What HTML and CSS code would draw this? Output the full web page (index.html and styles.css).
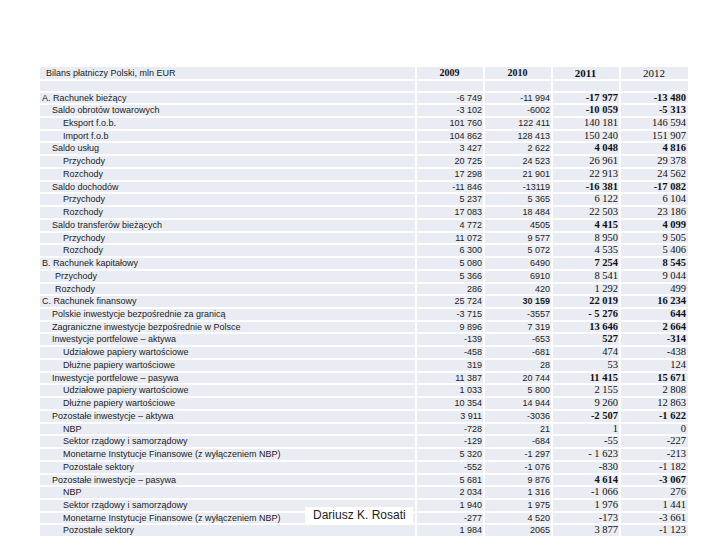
FILE: index.html
```html
<!DOCTYPE html>
<html lang="pl">
<head>
<meta charset="utf-8">
<title>Bilans płatniczy Polski</title>
<link rel="stylesheet" href="styles.css">
</head>
<body>
<div class="slide">
  <table class="bop">
    <colgroup>
      <col class="c-label"><col class="c-num"><col class="c-num"><col class="c-num"><col class="c-num last">
    </colgroup>
    <thead>
      <tr class="head">
        <th class="title">Bilans płatniczy Polski, mln EUR</th>
        <th class="yr b">2009</th>
        <th class="yr b">2010</th>
        <th class="yr b big">2011</th>
        <th class="yr big">2012</th>
      </tr>
      <tr class="blank"><td></td><td></td><td></td><td></td><td></td></tr>
    </thead>
    <tbody>
      <tr><td class="l0">A. Rachunek bieżący</td><td>-6 749</td><td>-11 994</td><td class="s b">-17 977</td><td class="s b">-13 480</td></tr>
      <tr><td class="l1">Saldo obrotów towarowych</td><td>-3 102</td><td>-6002</td><td class="s b">-10 059</td><td class="s b">-5 313</td></tr>
      <tr><td class="l2">Eksport f.o.b.</td><td>101 760</td><td>122 411</td><td class="s">140 181</td><td class="s">146 594</td></tr>
      <tr><td class="l2">Import f.o.b</td><td>104 862</td><td>128 413</td><td class="s">150 240</td><td class="s">151 907</td></tr>
      <tr><td class="l1">Saldo usług</td><td>3 427</td><td>2 622</td><td class="s b">4 048</td><td class="s b">4 816</td></tr>
      <tr><td class="l2">Przychody</td><td>20 725</td><td>24 523</td><td class="s">26 961</td><td class="s">29 378</td></tr>
      <tr><td class="l2">Rozchody</td><td>17 298</td><td>21 901</td><td class="s">22 913</td><td class="s">24 562</td></tr>
      <tr><td class="l1">Saldo dochodów</td><td>-11 846</td><td>-13119</td><td class="s b">-16 381</td><td class="s b">-17 082</td></tr>
      <tr><td class="l2">Przychody</td><td>5 237</td><td>5 365</td><td class="s">6 122</td><td class="s">6 104</td></tr>
      <tr><td class="l2">Rozchody</td><td>17 083</td><td>18 484</td><td class="s">22 503</td><td class="s">23 186</td></tr>
      <tr><td class="l1">Saldo transferów bieżących</td><td>4 772</td><td>4505</td><td class="s b">4 415</td><td class="s b">4 099</td></tr>
      <tr><td class="l2">Przychody</td><td>11 072</td><td>9 577</td><td class="s">8 950</td><td class="s">9 505</td></tr>
      <tr><td class="l2">Rozchody</td><td>6 300</td><td>5 072</td><td class="s">4 535</td><td class="s">5 406</td></tr>
      <tr><td class="l0">B. Rachunek kapitałowy</td><td>5 080</td><td>6490</td><td class="s b">7 254</td><td class="s b">8 545</td></tr>
      <tr><td class="lb">Przychody</td><td>5 366</td><td>6910</td><td class="s">8 541</td><td class="s">9 044</td></tr>
      <tr><td class="lb">Rozchody</td><td>286</td><td>420</td><td class="s">1 292</td><td class="s">499</td></tr>
      <tr><td class="l0">C. Rachunek finansowy</td><td>25 724</td><td class="b">30 159</td><td class="s b">22 019</td><td class="s b">16 234</td></tr>
      <tr><td class="l1">Polskie inwestycje bezpośrednie za granicą</td><td>-3 715</td><td>-3557</td><td class="s b">- 5 276</td><td class="s b">644</td></tr>
      <tr><td class="l1">Zagraniczne inwestycje bezpośrednie w Polsce</td><td>9 896</td><td>7 319</td><td class="s b">13 646</td><td class="s b">2 664</td></tr>
      <tr><td class="l1">Inwestycje portfelowe – aktywa</td><td>-139</td><td>-653</td><td class="s b">527</td><td class="s b">-314</td></tr>
      <tr><td class="l2">Udziałowe papiery wartościowe</td><td>-458</td><td>-681</td><td class="s">474</td><td class="s">-438</td></tr>
      <tr><td class="l2">Dłużne papiery wartościowe</td><td>319</td><td>28</td><td class="s">53</td><td class="s">124</td></tr>
      <tr><td class="l1">Inwestycje portfelowe – pasywa</td><td>11 387</td><td>20 744</td><td class="s b">11 415</td><td class="s b">15 671</td></tr>
      <tr><td class="l2">Udziałowe papiery wartościowe</td><td>1 033</td><td>5 800</td><td class="s">2 155</td><td class="s">2 808</td></tr>
      <tr><td class="l2">Dłużne papiery wartościowe</td><td>10 354</td><td>14 944</td><td class="s">9 260</td><td class="s">12 863</td></tr>
      <tr><td class="l1">Pozostałe inwestycje – aktywa</td><td>3 911</td><td>-3036</td><td class="s b">-2 507</td><td class="s b">-1 622</td></tr>
      <tr><td class="l2">NBP</td><td>-728</td><td>21</td><td class="s">1</td><td class="s">0</td></tr>
      <tr><td class="l2">Sektor rządowy i samorządowy</td><td>-129</td><td>-684</td><td class="s">-55</td><td class="s">-227</td></tr>
      <tr><td class="l2">Monetarne Instytucje Finansowe (z wyłączeniem NBP)</td><td>5 320</td><td>-1 297</td><td class="s">- 1 623</td><td class="s">-213</td></tr>
      <tr><td class="l2">Pozostałe sektory</td><td>-552</td><td>-1 076</td><td class="s">-830</td><td class="s">-1 182</td></tr>
      <tr><td class="l1">Pozostałe inwestycje – pasywa</td><td>5 681</td><td>9 876</td><td class="s b">4 614</td><td class="s b">-3 067</td></tr>
      <tr><td class="l2">NBP</td><td>2 034</td><td>1 316</td><td class="s">-1 066</td><td class="s">276</td></tr>
      <tr><td class="l2">Sektor rządowy i samorządowy</td><td>1 940</td><td>1 975</td><td class="s">1 976</td><td class="s">1 441</td></tr>
      <tr><td class="l2">Monetarne Instytucje Finansowe (z wyłączeniem NBP)</td><td>-277</td><td>4 520</td><td class="s">-173</td><td class="s">-3 661</td></tr>
      <tr><td class="l2">Pozostałe sektory</td><td>1 984</td><td>2065</td><td class="s">3 877</td><td class="s">-1 123</td></tr>
    </tbody>
  </table>
  <div class="author">Dariusz K. Rosati</div>
</div>
</body>
</html>
```
FILE: styles.css
```css
html, body {
  margin: 0;
  padding: 0;
  background: #ffffff;
}

.slide {
  position: relative;
  width: 720px;
  height: 540px;
  overflow: hidden;
  padding: 65px 0 0 38px;
  box-sizing: border-box;
}

.bop {
  border-collapse: separate;
  border-spacing: 2px;
  table-layout: fixed;
  width: 652px;
  font-family: "Liberation Sans", Arial, sans-serif;
  font-size: 9px;
  color: #1c1c1c;
}

.c-label { width: 375px; }
.c-num { width: 66px; }
.c-num.last { width: 67px; }

.bop th,
.bop td {
  background: #e9ecf2;
  padding: 0 1px 0 0;
  box-sizing: border-box;
  white-space: nowrap;
  overflow: hidden;
  text-align: right;
  font-weight: normal;
  vertical-align: middle;
}

.bop tbody td {
  height: 10.74px;
  line-height: 10.74px;
}

.head th {
  height: 12px;
  line-height: 12px;
}

.blank td {
  height: 9.5px;
  line-height: 9.5px;
}

.bop th.title {
  text-align: left;
  padding-left: 6px;
  font-size: 9px;
}

.bop th.yr {
  text-align: center;
  font-family: "Liberation Serif", "Times New Roman", serif;
  font-size: 10px;
  color: #111;
}

.bop th.yr.big { font-size: 11px; }

.bop th.yr.b { font-weight: bold; }

.bop td.l0,
.bop td.l1,
.bop td.l2,
.bop td.lb {
  text-align: left;
  font-size: 9px;
}

.bop td.l0 { padding-left: 2px; }
.bop td.l1 { padding-left: 12px; }
.bop td.l2 { padding-left: 23px; }
.bop td.lb { padding-left: 15px; }

.bop td.s {
  font-family: "Liberation Serif", "Times New Roman", serif;
  font-size: 10.5px;
  color: #111;
}

.bop td.s:last-child { padding-right: 2px; }

.bop td.b { font-weight: bold; }

.author {
  position: absolute;
  left: 305px;
  top: 507px;
  width: 108px;
  height: 17px;
  padding-left: 8px;
  box-sizing: border-box;
  background: #ffffff;
  font-family: "Liberation Sans", Arial, sans-serif;
  font-size: 12px;
  line-height: 17px;
  color: #222;
}
```
